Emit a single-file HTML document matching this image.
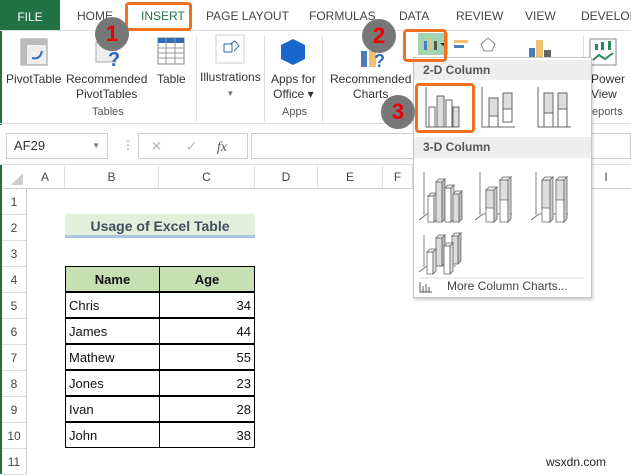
<!DOCTYPE html>
<html><head><meta charset="utf-8"><style>
*{box-sizing:border-box;margin:0;padding:0}
body{width:631px;height:474px;overflow:hidden;background:#fff;font-family:"Liberation Sans",sans-serif;position:relative;color:#333}
.a{position:absolute}
.tab{position:absolute;top:9px;font-size:12px;color:#444}
.lbl{position:absolute;font-size:12px;color:#333;text-align:center;line-height:15px}
.grp{position:absolute;font-size:11px;color:#555;top:106px}
.sep{position:absolute;top:36px;width:1px;height:86px;background:#ddd}
.col{position:absolute;top:166px;height:23px;font-size:12px;color:#444;text-align:center;line-height:23px;border-right:1px solid #ddd}
.row{position:absolute;left:2px;width:24px;height:26px;font-size:12px;color:#444;line-height:26px;text-align:center;border-bottom:1px solid #ddd}
.badge{position:absolute;width:34px;height:34px;border-radius:50%;background:#777;color:#e00;font-weight:bold;font-size:22px;text-align:center;line-height:34px}
.cell{position:absolute;height:26px;font-size:13px;line-height:26px;border:1px solid #000;padding:0 3px;color:#111}
</style></head><body>
<div class="a" style="left:0;top:0;width:2px;height:474px;background:#217346"></div>
<div class="a" style="left:0;top:0;width:60px;height:30px;background:#217346;color:#fff;font-size:12px;line-height:34px;text-align:center">FILE</div>
<div class="a" style="left:0;top:30px;width:631px;height:1px;background:#ddd"></div>
<div class="tab" style="left:77px">HOME</div>
<div class="tab" style="left:141px;color:#217346">INSERT</div>
<div class="a" style="left:125px;top:2px;width:67px;height:29px;border:3px solid #f07020;border-radius:4px"></div>
<div class="tab" style="left:206px">PAGE LAYOUT</div>
<div class="tab" style="left:309px">FORMULAS</div>
<div class="tab" style="left:399px">DATA</div>
<div class="tab" style="left:456px">REVIEW</div>
<div class="tab" style="left:525px">VIEW</div>
<div class="tab" style="left:581px">DEVELOP</div>
<div class="a" style="left:0;top:123px;width:631px;height:1px;background:#ddd"></div>
<svg class="a" style="left:20px;top:38px" width="28" height="28"><rect x="1" y="1" width="26" height="26" fill="#eee" stroke="#999"/><rect x="1" y="1" width="26" height="6" fill="#bbb"/><rect x="1" y="1" width="6" height="26" fill="#bbb"/><path d="M12 20 q8 2 10 -7" stroke="#2a6ebb" stroke-width="2" fill="none"/></svg>
<svg class="a" style="left:94px;top:40px" width="28" height="28"><rect x="2" y="2" width="20" height="20" fill="#eee" stroke="#aaa"/><text x="14" y="26" font-size="20" font-weight="bold" fill="#2a6ebb" font-family="Liberation Sans">?</text></svg>
<svg class="a" style="left:157px;top:37px" width="28" height="28"><rect x="1" y="1" width="26" height="26" fill="#fff" stroke="#888"/><rect x="1" y="1" width="26" height="5" fill="#2a6ebb"/><path d="M1 11H27M1 16H27M1 21H27M9 1V27M18 1V27" stroke="#999"/></svg>
<svg class="a" style="left:215px;top:34px" width="30" height="30"><rect x="1" y="1" width="28" height="28" fill="#fff" stroke="#ccc"/><path d="M9 10h8v8h-8z M15 10l5-3 4 5-5 5" stroke="#2a6ebb" fill="none"/></svg>
<svg class="a" style="left:279px;top:38px" width="28" height="28"><path d="M14 1l12 6v14l-12 6-12-6v-14z" fill="#1a66cc"/></svg>
<svg class="a" style="left:360px;top:45px" width="28" height="22"><rect x="1" y="6" width="6" height="16" fill="#4a7ebb"/><rect x="9" y="2" width="7" height="20" fill="#f0c070"/><text x="14" y="22" font-size="18" font-weight="bold" fill="#2a6ebb" font-family="Liberation Sans">?</text></svg>
<div class="lbl" style="left:6px;top:72px">PivotTable</div>
<div class="lbl" style="left:66px;top:72px">Recommended<br>PivotTables</div>
<div class="lbl" style="left:157px;top:72px">Table</div>
<div class="lbl" style="left:200px;top:70px">Illustrations<br><span style="font-size:8px;color:#777">▼</span></div>
<div class="lbl" style="left:271px;top:72px">Apps for<br>Office ▾</div>
<div class="lbl" style="left:330px;top:72px">Recommended<br>Charts</div>
<div class="grp" style="left:92px">Tables</div>
<div class="grp" style="left:282px">Apps</div>
<div class="sep" style="left:196px"></div><div class="sep" style="left:264px"></div><div class="sep" style="left:322px"></div><div class="sep" style="left:583px"></div>
<svg class="a" style="left:418px;top:33px" width="100" height="22"><rect x="0" y="0" width="30" height="22" fill="#9fd5b0"/><rect x="6" y="8" width="3" height="9" fill="#4a7ebb"/><rect x="11" y="5" width="3" height="12" fill="#f0c070"/><rect x="16" y="8" width="3" height="9" fill="#555"/><path d="M22 10l3 3 3-3z" fill="#333"/><rect x="36" y="7" width="14" height="3" fill="#f0c070"/><rect x="36" y="12" width="10" height="3" fill="#4a7ebb"/><path d="M70 5l7 6-3 7h-8l-3-7z" stroke="#888" fill="none"/></svg>
<svg class="a" style="left:527px;top:38px" width="30" height="25"><rect x="2" y="10" width="6" height="14" fill="#4a7ebb"/><rect x="9" y="2" width="7" height="22" fill="#f0c070"/><rect x="17" y="12" width="7" height="12" fill="#666"/></svg>
<svg class="a" style="left:589px;top:38px" width="28" height="28"><rect x="1" y="1" width="26" height="26" fill="#fff" stroke="#888"/><rect x="6" y="6" width="3" height="6" fill="#2a8a5a"/><rect x="12" y="4" width="3" height="8" fill="#2a8a5a"/><rect x="19" y="3" width="3" height="9" fill="#2a8a5a"/><path d="M4 22l6-5 6 4 8-6" stroke="#2a8a5a" stroke-width="2" fill="none"/></svg>
<div class="lbl" style="left:591px;top:72px;text-align:left">Power<br>View</div>
<div class="grp" style="left:592px">eports</div>
<div class="a" style="left:0;top:125px;width:631px;height:40px;background:#fff;border-bottom:1px solid #ddd"></div>
<div class="a" style="left:6px;top:133px;width:102px;height:26px;border:1px solid #ccc;font-size:13px;line-height:24px;padding-left:7px">AF29<span style="position:absolute;right:7px;font-size:8px;color:#777">▼</span></div>
<div class="a" style="left:122px;top:138px;color:#999;font-size:12px">⋮</div>
<div class="a" style="left:138px;top:133px;width:110px;height:26px;border:1px solid #ccc;font-size:14px;line-height:24px;color:#bbb">&nbsp;&nbsp;&nbsp;✕&nbsp;&nbsp;&nbsp;&nbsp;&nbsp;&nbsp;✓&nbsp;&nbsp;&nbsp;&nbsp;&nbsp;<i style="color:#555;font-family:'Liberation Serif'">fx</i></div>
<div class="a" style="left:251px;top:133px;width:380px;height:26px;border:1px solid #ccc"></div>
<div class="a" style="left:2px;top:166px;width:629px;height:23px;background:#fff;border-bottom:1px solid #ccc"></div>
<svg class="a" style="left:10px;top:172px" width="14" height="14"><path d="M13 1V13H1z" fill="#ccc"/></svg>
<div class="col" style="left:26px;width:39px">A</div>
<div class="col" style="left:65px;width:94px">B</div>
<div class="col" style="left:159px;width:96px">C</div>
<div class="col" style="left:255px;width:63px">D</div>
<div class="col" style="left:318px;width:65px">E</div>
<div class="col" style="left:383px;width:30px">F</div>
<div class="col" style="left:592px;width:28px;border:none">I</div>
<div class="a" style="left:26px;top:189px;width:1px;height:285px;background:#ccc"></div>
<div class="row" style="top:189px">1</div><div class="row" style="top:215px">2</div><div class="row" style="top:241px">3</div><div class="row" style="top:267px">4</div><div class="row" style="top:293px">5</div><div class="row" style="top:319px">6</div><div class="row" style="top:345px">7</div><div class="row" style="top:371px">8</div><div class="row" style="top:397px">9</div><div class="row" style="top:423px">10</div><div class="row" style="top:449px">11</div>
<div class="a" style="left:65px;top:214px;width:190px;height:24px;background:#e2efda;border-bottom:3px solid #a9c4e4;font-size:14px;font-weight:bold;color:#3f4e60;text-align:center;line-height:24px">Usage of Excel Table</div>
<div class="cell" style="left:65px;top:266px;width:95px;background:#c6e0b4;font-weight:bold;text-align:center">Name</div>
<div class="cell" style="left:159px;top:266px;width:96px;background:#c6e0b4;font-weight:bold;text-align:center">Age</div>
<div class="cell" style="left:65px;top:292px;width:95px">Chris</div><div class="cell" style="left:159px;top:292px;width:96px;text-align:right">34</div>
<div class="cell" style="left:65px;top:318px;width:95px">James</div><div class="cell" style="left:159px;top:318px;width:96px;text-align:right">44</div>
<div class="cell" style="left:65px;top:344px;width:95px">Mathew</div><div class="cell" style="left:159px;top:344px;width:96px;text-align:right">55</div>
<div class="cell" style="left:65px;top:370px;width:95px">Jones</div><div class="cell" style="left:159px;top:370px;width:96px;text-align:right">23</div>
<div class="cell" style="left:65px;top:396px;width:95px">Ivan</div><div class="cell" style="left:159px;top:396px;width:96px;text-align:right">28</div>
<div class="cell" style="left:65px;top:422px;width:95px">John</div><div class="cell" style="left:159px;top:422px;width:96px;text-align:right">38</div>
<div class="a" style="left:546px;top:455px;font-size:12px;color:#222">wsxdn.com</div>
<div class="a" style="left:413px;top:57px;width:179px;height:241px;background:#fff;border:1px solid #c6c6c6;box-shadow:1px 2px 3px rgba(0,0,0,.2)"></div>
<div class="a" style="left:414px;top:60px;width:177px;height:20px;background:#eee;font-size:12px;font-weight:bold;color:#555;line-height:20px;padding-left:9px">2-D Column</div>
<div class="a" style="left:414px;top:137px;width:177px;height:21px;background:#eee;font-size:12px;font-weight:bold;color:#555;line-height:21px;padding-left:9px">3-D Column</div>
<svg class="a" style="left:414px;top:80px" width="177" height="218">
<g fill="none" stroke="#666"><path d="M12 7V47H45"/><rect x="15" y="27" width="6" height="20"/><rect x="23" y="16" width="7" height="31" fill="#ddd"/><rect x="32" y="20" width="6" height="27"/><rect x="39" y="27" width="6" height="20" fill="#ddd"/>
<path d="M68 7V47H101"/><rect x="75" y="18" width="9" height="29"/><rect x="89" y="13" width="9" height="29"/>
<path d="M124 7V47H157"/><rect x="130" y="13" width="9" height="34"/><rect x="144" y="13" width="9" height="34"/></g>
<rect x="75" y="18" width="9" height="18" fill="#ddd" stroke="#666"/><rect x="89" y="13" width="9" height="16" fill="#ddd" stroke="#666"/>
<rect x="130" y="13" width="9" height="20" fill="#ddd" stroke="#666"/><rect x="144" y="13" width="9" height="16" fill="#ddd" stroke="#666"/>
<g stroke="#666" stroke-width="0.8">
<path d="M10 92V135M5 140l8-6H42" fill="none"/>
<path d="M14 116h6v26h-6z" fill="#fff"/><path d="M14 116l3-3h6l-3 3z" fill="#ddd"/><path d="M20 116l3-3v26l-3 3z" fill="#ddd"/>
<path d="M22 102h6v40h-6z" fill="#ddd"/><path d="M22 102l3-3h6l-3 3z" fill="#eee"/><path d="M28 102l3-3v40l-3 3z" fill="#bbb"/>
<path d="M31 108h6v34h-6z" fill="#fff"/><path d="M31 108l3-3h6l-3 3z" fill="#eee"/><path d="M37 108l3-3v34l-3 3z" fill="#ddd"/>
<path d="M39 114h6v28h-6z" fill="#ddd"/><path d="M39 114l3-3h6l-3 3z" fill="#eee"/><path d="M45 114l3-3v28l-3 3z" fill="#bbb"/>
<path d="M66 92V135M61 140l8-6H98" fill="none"/>
<path d="M72 110h8v32h-8z" fill="#fff"/><path d="M72 110h8v18h-8z" fill="#ddd"/><path d="M72 110l3-3h8l-3 3z" fill="#eee"/><path d="M80 110l3-3v32l-3 3z" fill="#ccc"/>
<path d="M86 100h8v42h-8z" fill="#fff"/><path d="M86 100h8v20h-8z" fill="#ddd"/><path d="M86 100l3-3h8l-3 3z" fill="#eee"/><path d="M94 100l3-3v42l-3 3z" fill="#ccc"/>
<path d="M122 92V135M117 140l8-6H154" fill="none"/>
<path d="M128 100h8v42h-8z" fill="#fff"/><path d="M128 100h8v28h-8z" fill="#ddd"/><path d="M128 100l3-3h8l-3 3z" fill="#eee"/><path d="M136 100l3-3v42l-3 3z" fill="#ccc"/>
<path d="M142 100h8v42h-8z" fill="#fff"/><path d="M142 100h8v20h-8z" fill="#ddd"/><path d="M142 100l3-3h8l-3 3z" fill="#eee"/><path d="M150 100l3-3v42l-3 3z" fill="#ccc"/>
<path d="M10 155V187M5 192l8-6H42" fill="none"/>
<path d="M22 158h6v28h-6z" fill="#ddd"/><path d="M22 158l3-3h6l-3 3z" fill="#eee"/><path d="M28 158l3-3v28l-3 3z" fill="#bbb"/>
<path d="M38 156h6v28h-6z" fill="#ddd"/><path d="M38 156l3-3h6l-3 3z" fill="#eee"/><path d="M44 156l3-3v28l-3 3z" fill="#bbb"/>
<path d="M13 172h6v22h-6z" fill="#fff"/><path d="M13 172l3-3h6l-3 3z" fill="#eee"/><path d="M19 172l3-3v22l-3 3z" fill="#ddd"/>
<path d="M30 166h6v28h-6z" fill="#fff"/><path d="M30 166l3-3h6l-3 3z" fill="#eee"/><path d="M36 166l3-3v28l-3 3z" fill="#ddd"/>
</g>
<path d="M5 198H170" stroke="#ddd"/>
<path d="M6 202V212H18M9 206V212M12 204V212M15 207V212" stroke="#555" fill="none"/>
<text x="33" y="210" font-size="12" fill="#444" font-family="Liberation Sans">More Column Charts...</text>
</svg>
<div class="a" style="left:415px;top:83px;width:60px;height:50px;border:3px solid #f07020;border-radius:4px"></div>
<div class="a" style="left:403px;top:29px;width:44px;height:33px;border:3px solid #f07020;border-radius:4px"></div>
<div class="badge" style="left:95px;top:17px">1</div>
<div class="badge" style="left:362px;top:19px">2</div>
<div class="badge" style="left:381px;top:95px">3</div>
</body></html>
